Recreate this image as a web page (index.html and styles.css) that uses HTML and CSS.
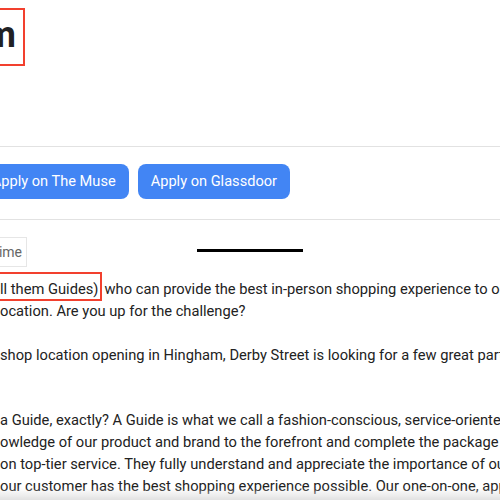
FILE: index.html
```html
<!DOCTYPE html>
<html lang="en">
<head>
<meta charset="utf-8">
<title>Guide - Hingham</title>
<link rel="stylesheet" href="styles.css">
</head>
<body>
<main class="job">
  <header class="job-header">
    <div class="title-anchor">
      <h1 class="title-box">Hingham</h1>
    </div>
  </header>
  <hr class="divider">
  <section class="apply-row">
    <div class="apply-anchor">
      <a class="apply-btn" href="#">Apply on The Muse</a>
      <a class="apply-btn" href="#">Apply on Glassdoor</a>
    </div>
  </section>
  <hr class="divider">
  <section class="meta-row">
    <div class="chip-anchor">
      <span class="chip">Full-time</span>
    </div>
    <span class="handle"></span>
  </section>
  <div class="desc">
    <span class="mark">ll them Guides)</span> who can provide the best in-person shopping experience to our customers<br>
    ocation. Are you up for the challenge?<br>
    <br>
    shop location opening in Hingham, Derby Street is looking for a few great partners<br>
    <br>
    <br>
    a Guide, exactly? A Guide is what we call a fashion-conscious, service-oriented<br>
    owledge of our product and brand to the forefront and complete the package with<br>
    on top-tier service. They fully understand and appreciate the importance of our<br>
    our customer has the best shopping experience possible. Our one-on-one, appointment<br>
  </div>
</main>
</body>
</html>
```

FILE: styles.css
```css
html, body {
  margin: 0;
  padding: 0;
  background: #ffffff;
  overflow: hidden;
  height: 500px;
}
body {
  font-family: Roboto, "Noto Sans", Arial, sans-serif;
  color: #222222;
  position: relative;
}
body::after {
  content: "";
  position: fixed;
  left: 0;
  right: 0;
  bottom: 0;
  height: 12px;
  background: linear-gradient(to bottom, rgba(230,230,230,0), rgba(224,224,224,0.95));
  pointer-events: none;
}
.job {
  width: 500px;
}
.job-header {
  height: 146px;
  padding-top: 8px;
  box-sizing: border-box;
}
.title-anchor {
  width: 25px;
  display: flex;
  justify-content: flex-end;
}
.title-box {
  margin: 0;
  flex: none;
  border: 2px solid #f2402e;
  padding: 0 7px 4px 6px;
  font-size: 36px;
  font-weight: 700;
  line-height: 50px;
  white-space: nowrap;
  color: #202124;
}
.divider {
  margin: 0;
  border: 0;
  border-top: 1px solid #e2e2e2;
  height: 0;
}
.apply-row {
  padding: 17px 0 20px;
}
.apply-anchor {
  width: 290px;
  display: flex;
  justify-content: flex-end;
  gap: 9px;
}
.apply-btn {
  flex: none;
  display: block;
  background: #4285f4;
  color: #ffffff;
  text-decoration: none;
  font-size: 14.6px;
  line-height: 35px;
  padding: 0 13px;
  border-radius: 8px;
  white-space: nowrap;
}
.meta-row {
  padding-top: 17px;
  display: flex;
  align-items: flex-start;
}
.chip-anchor {
  width: 27px;
  display: flex;
  justify-content: flex-end;
}
.chip {
  flex: none;
  display: block;
  border: 1px solid #e6e6e6;
  height: 28px;
  line-height: 28px;
  padding: 0 4px 0 8px;
  font-size: 14px;
  color: #666666;
  white-space: nowrap;
}
.handle {
  display: block;
  margin-left: 170px;
  margin-top: 12px;
  width: 106px;
  height: 3px;
  background: #000000;
}
.desc {
  margin-top: 12px;
  font-size: 14.7px;
  line-height: 21.9px;
  white-space: nowrap;
  color: #222222;
}
.mark {
  border: 2px solid #f2402e;
  border-left: 0;
  padding: 6px 2px 1px 0;
  margin-right: -1.5px;
}
```
